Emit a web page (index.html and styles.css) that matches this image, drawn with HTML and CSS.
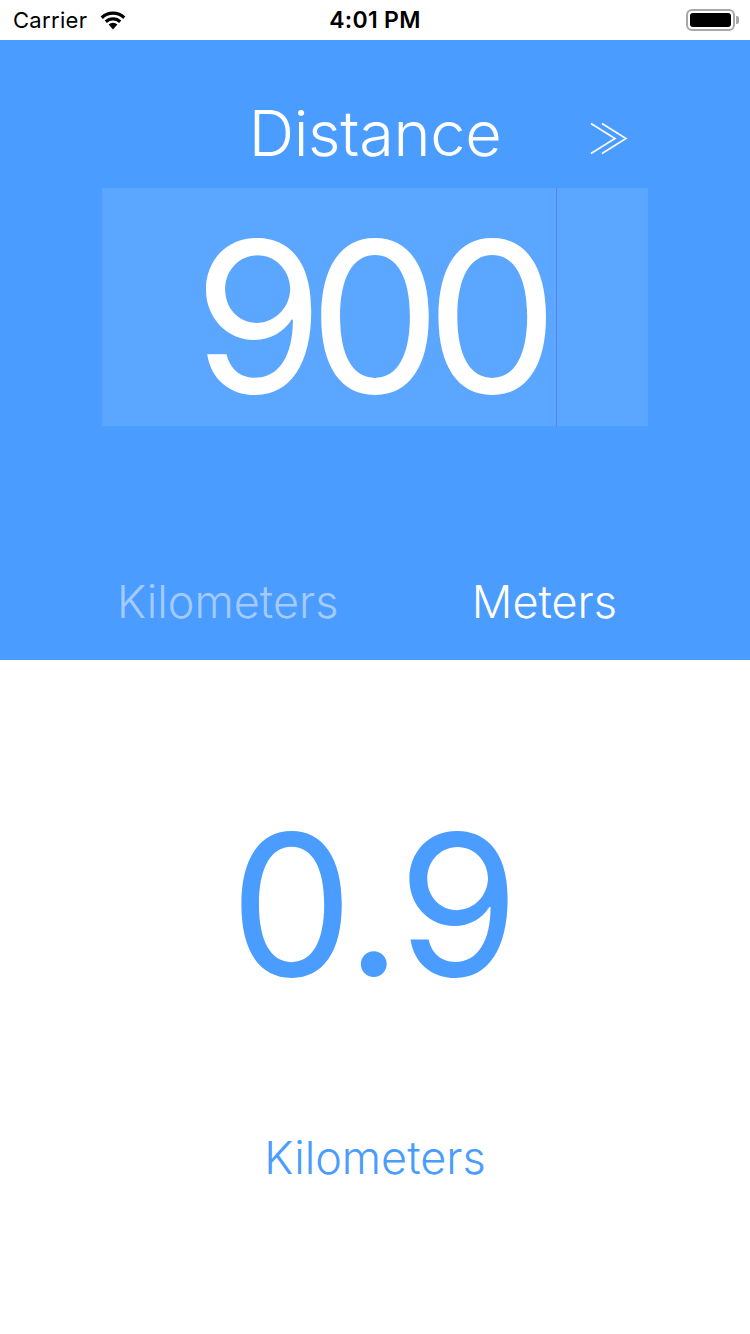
FILE: index.html
```html
<!DOCTYPE html>
<html>
<head>
<meta charset="utf-8">
<link rel="stylesheet" href="styles.css">
</head>
<body>
<div class="screen">
  <div class="status">
    <div class="carrier">Carrier
      <svg class="wifi" width="30" height="22" viewBox="0 0 26 19">
        <path d="M13 18.5 L9.2 14.3 A5.6 5.6 0 0 1 16.8 14.3 Z" fill="#000"/>
        <path d="M5.8 10.9 A10.4 10.4 0 0 1 20.2 10.9 L18.3 13 A7.6 7.6 0 0 0 7.7 13 Z" fill="#000"/>
        <path d="M2.3 7.3 A15.4 15.4 0 0 1 23.7 7.3 L21.8 9.4 A12.6 12.6 0 0 0 4.2 9.4 Z" fill="#000"/>
      </svg>
    </div>
    <div class="time">4:01 PM</div>
    <div class="battery">
      <div class="batt-body"><div class="batt-fill"></div></div>
      <div class="batt-tip"></div>
    </div>
  </div>
  <div class="top">
    <div class="header">
      <div class="title">Distance</div>
      <div class="swap">
        <svg width="38" height="34" viewBox="0 0 38 34">
          <path d="M1 1.5 L25 16.5 L1 31.5" fill="none" stroke="#fff" stroke-width="1.6"/>
          <path d="M12 1.5 L36 16.5 L12 31.5" fill="none" stroke="#fff" stroke-width="1.6"/>
        </svg>
      </div>
    </div>
    <div class="input">
      <span class="value">900</span><span class="caret"></span>
    </div>
    <div class="units">
      <div class="unit dim">Kilometers</div>
      <div class="unit">Meters</div>
    </div>
  </div>
  <div class="result">
    <div class="result-value">0.9</div>
    <div class="result-unit">Kilometers</div>
  </div>
</div>
</body>
</html>
```
FILE: styles.css
```css
* { box-sizing: border-box; }
html, body { margin: 0; padding: 0; background: #fff; }
body { width: 750px; height: 1334px; overflow: hidden; font-family: "Inter", "Roboto", sans-serif; }
.screen { display: flex; flex-direction: column; height: 1334px; }

.status {
  height: 40px;
  display: grid;
  grid-template-columns: 1fr auto 1fr;
  align-items: center;
  padding: 0 13px;
  color: #000;
}
.carrier { font-size: 22px; display: flex; align-items: center; gap: 11px; font-family: "Inter", sans-serif; letter-spacing: 0.3px; }
.wifi { margin-top: -3px; }
.time { font-size: 23px; font-weight: 600; text-align: center; letter-spacing: 0.3px; }
.battery { justify-self: end; display: flex; align-items: center; margin-right: -2px; }
.batt-body { width: 49px; height: 22px; border: 2px solid #a8a8a8; border-radius: 6px; padding: 2px; }
.batt-fill { width: 100%; height: 100%; background: #000; border-radius: 3px; }
.batt-tip { width: 3px; height: 8px; background: #a8a8a8; border-radius: 0 2px 2px 0; margin-left: 1px; }

.top {
  background: #4a9cff;
  height: 620px;
  display: flex;
  flex-direction: column;
}
.header {
  display: grid;
  grid-template-columns: 1fr auto 1fr;
  align-items: center;
  padding-top: 38px;
  height: 148px;
}
.title { grid-column: 2; font-size: 63px; font-weight: 300; color: #fff; line-height: 1; letter-spacing: -0.3px; }
.swap { grid-column: 3; padding-left: 89px; display: flex; padding-top: 12px; }

.input {
  margin: 0 102px;
  height: 238px;
  background: #5ba6ff;
  display: flex;
  justify-content: center;
}
.value {
  align-self: center;
  font-size: 210px;
  color: #fff;
  line-height: 1;
  font-family: "Inter", sans-serif;
  margin-top: 20px;
  letter-spacing: -15px;
}
.caret { width: 1px; background: #5a7ff0; margin-left: 12px; }

.units {
  display: flex;
  justify-content: space-between;
  padding: 0 133px 0 117px;
  margin-top: 153px;
}
.unit { font-size: 45px; font-weight: 300; color: #fff; line-height: 1; }
.unit.dim { color: #a3cbff; }

.result {
  flex: 1;
  display: flex;
  flex-direction: column;
  align-items: center;
}
.result-value {
  margin-top: 147px;
  font-size: 196px;
  color: #4a9cff;
  line-height: 1;
  font-family: "Inter", sans-serif;
  letter-spacing: -3px;
  padding-right: 4px;
}
.result-unit { margin-top: 132px; font-size: 45px; font-weight: 300; color: #4a9cff; line-height: 1; }
```
